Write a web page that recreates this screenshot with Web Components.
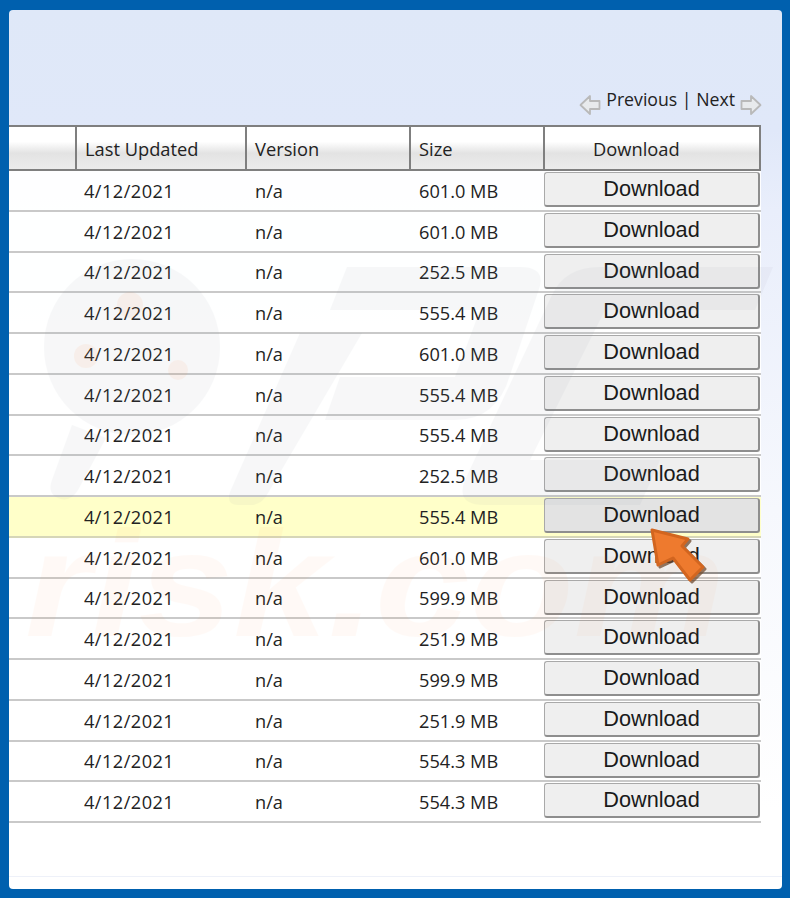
<!DOCTYPE html>
<html lang="en"><head><meta charset="utf-8"><style>
html,body{margin:0;height:100%}
body{width:790px;height:898px;overflow:hidden;background:#0060ae}
</style></head><body>
<x-window>
  <x-pager slot="pager"></x-pager>
  <x-table slot="table"></x-table>
</x-window>
<script>
const FONT='"Open Sans","Noto Sans",sans-serif';
customElements.define('x-window',class extends HTMLElement{constructor(){super();this.attachShadow({mode:'open'}).innerHTML=`<style>
:host{display:block;box-sizing:border-box;width:790px;height:898px;padding:10px 8px 9px 9px;font-family:${FONT};color:#222}
.panel{position:relative;box-sizing:border-box;height:879px;border-radius:4px;overflow:hidden;display:flex;flex-direction:column;
background:linear-gradient(180deg,#dfe8f8 0,#e0e8f9 120px,#e9eefb 200px,#f6f8fd 500px,#fff 800px)}
.top{height:115px;box-sizing:border-box;padding-right:20px;flex:none}
.tbl{flex:none;position:relative;z-index:0}
.foot{position:absolute;left:0;right:0;bottom:12px;height:1px;background:#eef1f9}
.wm{position:absolute;inset:0;pointer-events:none;z-index:1}
.wm text{font:italic 700 150px "Liberation Sans",sans-serif;fill:#ff8a3c;opacity:.04}
</style><div class="panel"><div class="top"><slot name="pager"></slot></div><div class="tbl"><slot name="table"></slot></div><div class="foot"></div>
<svg class="wm" viewBox="9 10 773 879" width="773" height="879" aria-hidden="true">
<g fill="#7a8696" opacity=".055">
<circle cx="132" cy="347" r="88"/>
<path d="M72 425 106 438 78 490Q70 503 58 498 47 493 52 480Z"/>
<path d="M347 267H520Q548 267 538 292L510 375Q497 420 455 420H325L340 377H455L480 310H330Z"/>
<path d="M300 333H362L268 493Q262 505 250 505H238Q226 505 230 492Z"/>
<path d="M773 267H600Q565 267 552 295L465 480Q455 505 485 505H640L660 460H530L605 310H755Z"/>
</g>
<g fill="#ff8a3c" opacity=".07"><circle cx="130" cy="305" r="13"/><circle cx="86" cy="356" r="12"/><circle cx="178" cy="370" r="10"/></g>
<text x="25" y="636" textLength="700" lengthAdjust="spacingAndGlyphs">risk.com</text>
</svg></div>`}});

customElements.define('x-pager',class extends HTMLElement{constructor(){super();
const arrow=d=>`<svg width="22" height="24" viewBox="0 0 22 24" style="transform:${d?'scaleX(-1)':'none'}"><path d="M1.500 12 11 3v5h9.500v8H11v5z" fill="#e8eaec" stroke="#b9b9b9" stroke-width="1.800" stroke-linejoin="round"/></svg>`;
this.attachShadow({mode:'open'}).innerHTML=`<style>
:host{display:flex;justify-content:flex-end;height:100%;box-sizing:border-box;padding-top:77px;font-size:17.700px;line-height:24px;color:#222}
svg{margin-top:6px;flex:none}.t{margin:0 5px}
</style>${arrow(0)}<span class="t">Previous | Next</span>${arrow(1)}`}});

customElements.define('x-head-cell',class extends HTMLElement{constructor(){super();this.attachShadow({mode:'open'}).innerHTML=`<style>
:host{display:flex;align-items:center;box-sizing:border-box;padding-left:var(--pl,8px);font-size:18.300px;color:#222;border-right:2px solid #7f7f7f;
background:linear-gradient(180deg,#fff 0,#fff 35%,#e3e3e3 62%,#ececec 100%)}
</style><slot></slot>`}});

customElements.define('x-dl-button',class extends HTMLElement{constructor(){super();this.attachShadow({mode:'open'}).innerHTML=`<style>
:host{display:flex;align-items:center;justify-content:center;box-sizing:border-box;height:35px;width:216px;
background:var(--bg,#efefef);border:1px solid #a9a9a9;border-right:2px solid #8e8e8e;border-bottom:2px solid #8e8e8e;border-radius:3px;
font:21.700px "Liberation Sans",Arial,sans-serif;color:#1a1a1a}
</style><slot></slot>`}});

customElements.define('x-row',class extends HTMLElement{constructor(){super();
const h=this.hasAttribute('hover');
this.attachShadow({mode:'open'}).innerHTML=`<style>
:host{display:grid;grid-template-columns:67px 170px 164px 134px 216px;box-sizing:border-box;height:40.750px;font-size:18.200px;color:#222;border-bottom:2px solid ${h?'#d6d6b8':'#c9c9c9'};${h?'background:#ffffc9;':''}}
div{padding-left:9px;display:flex;align-items:center;padding-top:1px;box-sizing:border-box}
div.c{padding-left:8px;letter-spacing:.45px}
.b{padding:1px 0 0;align-items:flex-start}
</style><span></span><div class="c">${this.getAttribute('d')}</div><div>n/a</div><div>${this.getAttribute('s')}</div><div class="b"><x-dl-button style="${h?'--bg:#e3e3e3':''}">Download</x-dl-button></div>`}});

const sizes=['601.0','601.0','252.5','555.4','601.0','555.4','555.4','252.5','555.4','601.0','599.9','251.9','599.9','251.9','554.3','554.3'];
customElements.define('x-table',class extends HTMLElement{constructor(){super();
this.attachShadow({mode:'open'}).innerHTML=`<style>
:host{display:block;width:752px;position:relative}
.head{display:grid;grid-template-columns:68px 170px 164px 134px 216px;height:46px;box-sizing:border-box;border-top:2px solid #7f7f7f;border-bottom:2px solid #7f7f7f}
.rows{background:rgba(255,255,255,.95)}
.cur{position:absolute;left:640px;top:400px;z-index:3;overflow:visible}
</style><div class="head"><x-head-cell></x-head-cell><x-head-cell>Last Updated</x-head-cell><x-head-cell>Version</x-head-cell><x-head-cell>Size</x-head-cell><x-head-cell style="--pl:48px">Download</x-head-cell></div>
<div class="rows">${sizes.map((s,i)=>`<x-row d="4/12/2021" s="${s} MB"${i==8?' hover':''}></x-row>`).join('')}</div>
<svg class="cur" width="60" height="60" viewBox="0 0 60 60"><path d="M3 5 39 14 33 21 54 42 41 55 24 33 9 40Z" transform="translate(2 2)" fill="#6e4a30" stroke="#6e4a30" stroke-width="3" stroke-linejoin="round" opacity=".75"/><path d="M3 5 39 14 33 21 54 42 41 55 24 33 9 40Z" fill="#ee7a2e" stroke="#d2651f" stroke-width="3" stroke-linejoin="round"/></svg>`}});
</script></body></html>
